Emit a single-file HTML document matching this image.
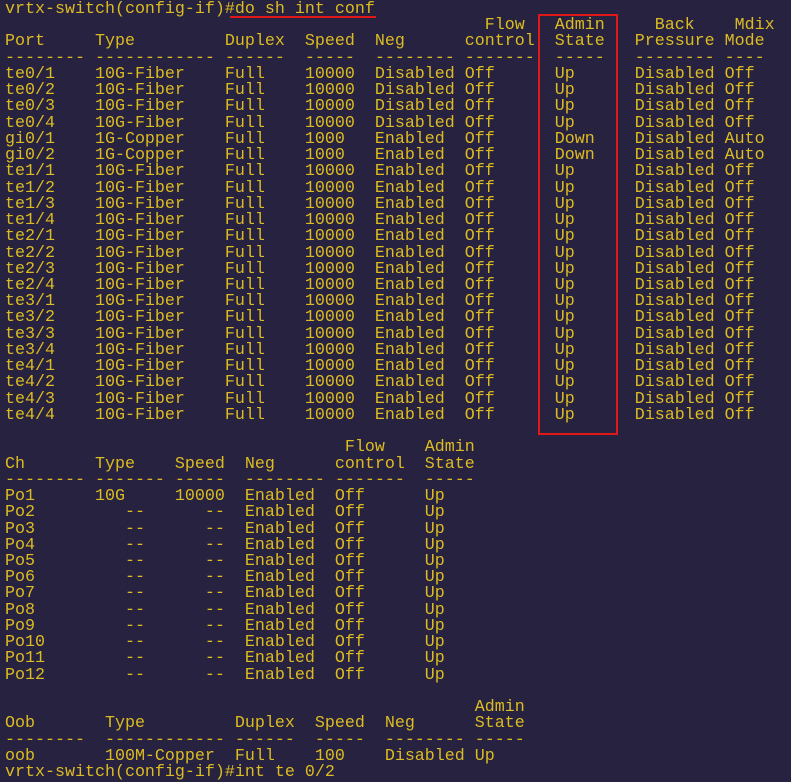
<!DOCTYPE html>
<html><head><meta charset="utf-8"><style>
html,body{margin:0;padding:0;width:791px;height:770px;overflow:hidden;background:#27223f;}
pre{position:absolute;left:5px;top:2px;margin:0;font-family:"Liberation Mono",monospace;font-size:16.667px;line-height:16.24px;color:#dcbc22;white-space:pre;}
.u{position:absolute;left:230px;top:16px;width:146px;height:2px;background:#e01818;}
.b{position:absolute;left:538px;top:14px;width:76px;height:417px;border:2px solid #e01818;}
</style></head><body>
<pre>vrtx-switch(config-if)#do sh int conf
                                                Flow   Admin     Back    Mdix
Port     Type         Duplex  Speed  Neg      control  State   Pressure Mode
-------- ------------ ------  -----  -------- -------  -----   -------- ----
te0/1    10G-Fiber    Full    10000  Disabled Off      Up      Disabled Off
te0/2    10G-Fiber    Full    10000  Disabled Off      Up      Disabled Off
te0/3    10G-Fiber    Full    10000  Disabled Off      Up      Disabled Off
te0/4    10G-Fiber    Full    10000  Disabled Off      Up      Disabled Off
gi0/1    1G-Copper    Full    1000   Enabled  Off      Down    Disabled Auto
gi0/2    1G-Copper    Full    1000   Enabled  Off      Down    Disabled Auto
te1/1    10G-Fiber    Full    10000  Enabled  Off      Up      Disabled Off
te1/2    10G-Fiber    Full    10000  Enabled  Off      Up      Disabled Off
te1/3    10G-Fiber    Full    10000  Enabled  Off      Up      Disabled Off
te1/4    10G-Fiber    Full    10000  Enabled  Off      Up      Disabled Off
te2/1    10G-Fiber    Full    10000  Enabled  Off      Up      Disabled Off
te2/2    10G-Fiber    Full    10000  Enabled  Off      Up      Disabled Off
te2/3    10G-Fiber    Full    10000  Enabled  Off      Up      Disabled Off
te2/4    10G-Fiber    Full    10000  Enabled  Off      Up      Disabled Off
te3/1    10G-Fiber    Full    10000  Enabled  Off      Up      Disabled Off
te3/2    10G-Fiber    Full    10000  Enabled  Off      Up      Disabled Off
te3/3    10G-Fiber    Full    10000  Enabled  Off      Up      Disabled Off
te3/4    10G-Fiber    Full    10000  Enabled  Off      Up      Disabled Off
te4/1    10G-Fiber    Full    10000  Enabled  Off      Up      Disabled Off
te4/2    10G-Fiber    Full    10000  Enabled  Off      Up      Disabled Off
te4/3    10G-Fiber    Full    10000  Enabled  Off      Up      Disabled Off
te4/4    10G-Fiber    Full    10000  Enabled  Off      Up      Disabled Off

                                  Flow    Admin
Ch       Type    Speed  Neg      control  State
-------- ------- -----  -------- -------  -----
Po1      10G     10000  Enabled  Off      Up
Po2         --      --  Enabled  Off      Up
Po3         --      --  Enabled  Off      Up
Po4         --      --  Enabled  Off      Up
Po5         --      --  Enabled  Off      Up
Po6         --      --  Enabled  Off      Up
Po7         --      --  Enabled  Off      Up
Po8         --      --  Enabled  Off      Up
Po9         --      --  Enabled  Off      Up
Po10        --      --  Enabled  Off      Up
Po11        --      --  Enabled  Off      Up
Po12        --      --  Enabled  Off      Up

                                               Admin
Oob       Type         Duplex  Speed  Neg      State
--------  ------------ ------  -----  -------- -----
oob       100M-Copper  Full    100    Disabled Up
vrtx-switch(config-if)#int te 0/2</pre>
<div class="u"></div>
<div class="b"></div>
</body></html>
